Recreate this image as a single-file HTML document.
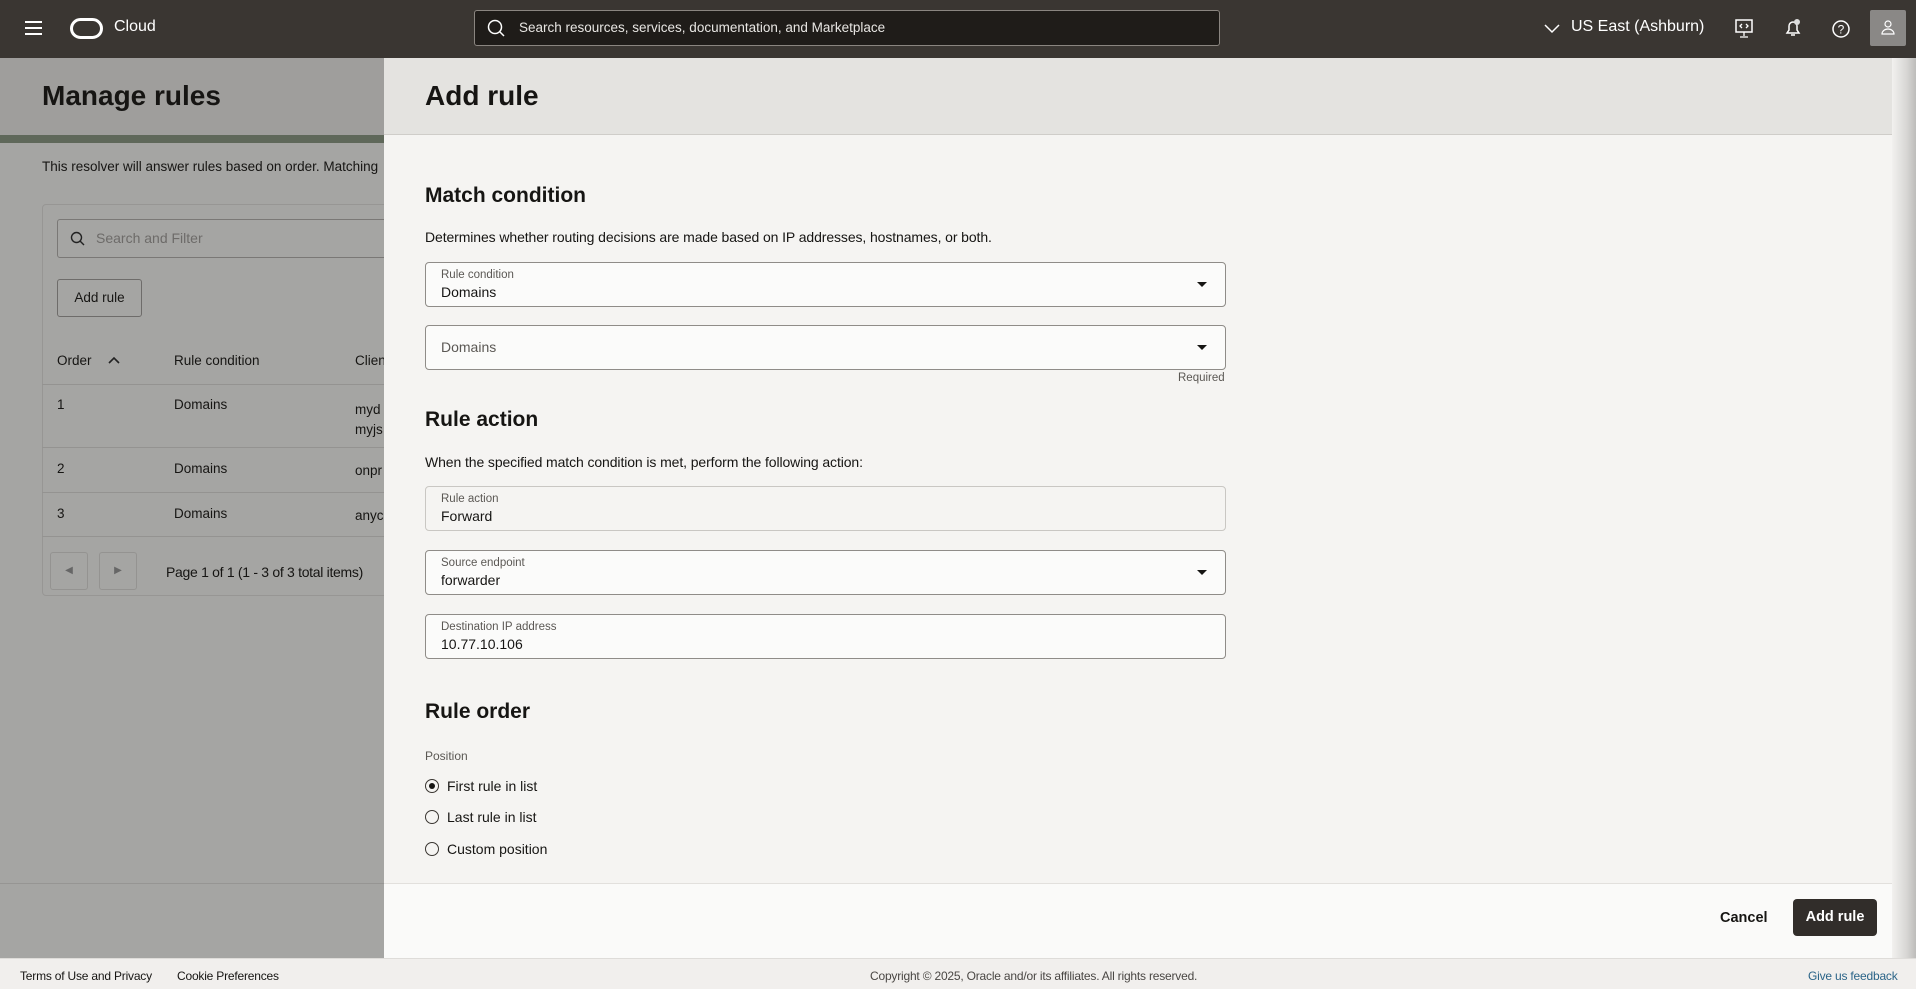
<!DOCTYPE html>
<html><head><meta charset="utf-8"><style>
*{box-sizing:border-box;margin:0;padding:0}
body{width:1916px;height:989px;overflow:hidden;font-family:"Liberation Sans",sans-serif;background:#a6a6a4;position:relative;color:#161513}
.top{position:absolute;left:0;top:0;width:1916px;height:58px;background:#3a3632;color:#fff}
.abs{position:absolute}
.left{position:absolute;left:0;top:58px;width:384px;height:900px;background:#a5a5a3}
.panel{position:absolute;left:384px;top:58px;width:1510px;height:900px;background:#f5f4f2}
.ph{position:absolute;left:0;top:0;width:100%;height:77px;background:#e4e3e0;border-bottom:1px solid #cfcdc9}
.field{position:absolute;left:41px;width:801px;height:45px;border:1px solid #8f8c88;border-radius:4px;background:#fbfbfa}
.field .lb{position:absolute;left:15px;top:6px;font-size:11.5px;color:#5b5854}
.field .v{position:absolute;left:15px;top:21px;font-size:14px}
.caret{position:absolute;right:18px;top:19px;width:0;height:0;border-left:5px solid transparent;border-right:5px solid transparent;border-top:5px solid #161513}
h2{position:absolute;left:41px;font-size:21px;font-weight:bold}
.t{position:absolute;font-size:14px}
.radio{position:absolute;left:41px;width:14px;height:14px;border:1.5px solid #3a3632;border-radius:50%}
</style></head><body>
<div class="top">
 <div class="abs" style="left:25px;top:21px;width:17px;height:2px;background:#fff;box-shadow:0 6px 0 #fff,0 12px 0 #fff"></div>
 <div class="abs" style="left:70px;top:18px;width:33px;height:21px;border:3.5px solid #fff;border-radius:11px"></div>
 <div class="abs" style="left:114px;top:18px;font-size:16px">Cloud</div>
 <div class="abs" style="left:474px;top:10px;width:746px;height:36px;border:1px solid #8a8580;border-radius:3px;background:#1f1c19"></div>
 <svg class="abs" style="left:487px;top:19px" width="18" height="18" viewBox="0 0 18 18"><circle cx="8" cy="8" r="6.5" fill="none" stroke="#fff" stroke-width="1.5"/><path d="M13 13l4 4" stroke="#fff" stroke-width="1.5"/></svg>
 <div class="abs" style="left:519px;top:20px;font-size:13.5px;color:#e8e6e3">Search resources, services, documentation, and Marketplace</div>
 <svg class="abs" style="left:1544px;top:22px" width="16" height="12"><path d="M1 3l7 7 7-7" fill="none" stroke="#fff" stroke-width="1.5"/></svg>
 <div class="abs" style="left:1571px;top:18px;font-size:16px">US East (Ashburn)</div>
 <svg class="abs" style="left:1735px;top:19px" width="18" height="20"><rect x="1" y="1" width="16" height="12" fill="none" stroke="#fff" stroke-width="1.5"/><path d="M9 13v4M5 18h8M7 5l-2 2 2 2M11 5l2 2-2 2" fill="none" stroke="#fff" stroke-width="1.3"/></svg>
 <svg class="abs" style="left:1784px;top:18px" width="18" height="20"><path d="M3 15h12l-2-3V8a4 4 0 0 0-8 0v4z M7 17h4" fill="none" stroke="#fff" stroke-width="1.5"/><circle cx="13" cy="4" r="3" fill="#ddd"/></svg>
 <svg class="abs" style="left:1831px;top:19px" width="20" height="20"><circle cx="10" cy="10" r="8" fill="none" stroke="#fff" stroke-width="1.5"/><text x="10" y="14.5" font-size="12" fill="#fff" text-anchor="middle" font-family="Liberation Sans">?</text></svg>
 <div class="abs" style="left:1870px;top:10px;width:36px;height:36px;background:#8a8886;border-radius:2px"></div>
 <svg class="abs" style="left:1880px;top:18px" width="16" height="18"><circle cx="8" cy="6" r="3" fill="none" stroke="#fff" stroke-width="1.2"/><path d="M2 16a6 5 0 0 1 12 0z" fill="none" stroke="#fff" stroke-width="1.2"/></svg>
</div>
<div class="left">
 <div class="abs" style="left:0;top:0;width:384px;height:77px;background:#9f9e9c"></div>
 <div class="abs" style="left:0;top:77px;width:384px;height:8px;background:#5f685a"></div>
 <div class="abs" style="left:42px;top:22px;font-size:28px;font-weight:bold">Manage rules</div>
 <div class="abs" style="left:42px;top:101px;font-size:13.5px;white-space:nowrap">This resolver will answer rules based on order. Matching</div>
 <div class="abs" style="left:42px;top:146px;width:360px;height:392px;border:1px solid #979694;border-radius:4px"></div>
 <div class="abs" style="left:57px;top:161px;width:340px;height:39px;border:1px solid #7a7876;border-radius:3px"></div>
 <svg class="abs" style="left:70px;top:173px" width="16" height="16"><circle cx="6.5" cy="6.5" r="5" fill="none" stroke="#222" stroke-width="1.4"/><path d="M10 10l4 4" stroke="#222" stroke-width="1.4"/></svg>
 <div class="abs" style="left:96px;top:172px;font-size:14px;color:#6d6b69">Search and Filter</div>
 <div class="abs" style="left:57px;top:221px;width:85px;height:38px;border:1px solid #6e6c6a;border-radius:3px;font-size:13.5px;line-height:36px;text-align:center">Add rule</div>
 <div class="abs" style="left:57px;top:295px;font-size:13.5px">Order</div>
 <svg class="abs" style="left:108px;top:298px" width="12" height="8"><path d="M1 7l5-5 5 5" fill="none" stroke="#222" stroke-width="1.6"/></svg>
 <div class="abs" style="left:174px;top:295px;font-size:13.5px">Rule condition</div>
 <div class="abs" style="left:355px;top:295px;font-size:13.5px">Client</div>
 <div class="abs" style="left:42px;top:326px;width:360px;border-top:1px solid #949391"></div>
 <div class="abs" style="left:57px;top:339px;font-size:13.5px">1</div><div class="abs" style="left:174px;top:339px;font-size:13.5px">Domains</div><div class="abs" style="left:355px;top:342px;font-size:13.5px;line-height:20px">myd<br>myjs</div>
 <div class="abs" style="left:42px;top:389px;width:360px;border-top:1px solid #949391"></div>
 <div class="abs" style="left:57px;top:403px;font-size:13.5px">2</div><div class="abs" style="left:174px;top:403px;font-size:13.5px">Domains</div><div class="abs" style="left:355px;top:405px;font-size:13.5px">onpr</div>
 <div class="abs" style="left:42px;top:434px;width:360px;border-top:1px solid #949391"></div>
 <div class="abs" style="left:57px;top:448px;font-size:13.5px">3</div><div class="abs" style="left:174px;top:448px;font-size:13.5px">Domains</div><div class="abs" style="left:355px;top:450px;font-size:13.5px">anyc</div>
 <div class="abs" style="left:42px;top:478px;width:360px;border-top:1px solid #949391"></div>
 <div class="abs" style="left:50px;top:494px;width:38px;height:38px;border:1px solid #949391;border-radius:3px;font-size:10px;color:#666;text-align:center;line-height:36px">◀</div>
 <div class="abs" style="left:99px;top:494px;width:38px;height:38px;border:1px solid #949391;border-radius:3px;font-size:10px;color:#666;text-align:center;line-height:36px">▶</div>
 <div class="abs" style="left:166px;top:506px;font-size:14px;letter-spacing:-0.3px;white-space:nowrap">Page 1 of 1 (1 - 3 of 3 total items)</div>
 <div class="abs" style="left:0;top:825px;width:384px;border-top:1px solid #969593"></div>
</div>
<div class="panel">
 <div class="ph"></div>
 <div class="abs" style="left:41px;top:22px;font-size:28px;font-weight:bold">Add rule</div>
 <h2 style="top:126px">Match condition</h2>
 <div class="t" style="left:41px;top:171px;letter-spacing:-0.1px">Determines whether routing decisions are made based on IP addresses, hostnames, or both.</div>
 <div class="field" style="top:204px"><div class="lb">Rule condition</div><div class="v">Domains</div><div class="caret"></div></div>
 <div class="field" style="top:267px"><div class="v" style="top:13px;color:#5b5854">Domains</div><div class="caret"></div></div>
 <div class="abs" style="left:794px;top:314px;font-size:11.5px;color:#5b5854">Required</div>
 <h2 style="top:350px">Rule action</h2>
 <div class="t" style="left:41px;top:396px;letter-spacing:-0.1px">When the specified match condition is met, perform the following action:</div>
 <div class="field" style="top:428px;border-color:#c9c7c3;background:#f5f4f2"><div class="lb">Rule action</div><div class="v">Forward</div></div>
 <div class="field" style="top:492px"><div class="lb">Source endpoint</div><div class="v">forwarder</div><div class="caret"></div></div>
 <div class="field" style="top:556px"><div class="lb">Destination IP address</div><div class="v">10.77.10.106</div></div>
 <h2 style="top:642px">Rule order</h2>
 <div class="abs" style="left:41px;top:691px;font-size:12px;color:#5b5854">Position</div>
 <div class="radio" style="top:721px"><div style="position:absolute;left:2.5px;top:2.5px;width:6px;height:6px;border-radius:50%;background:#161513"></div></div>
 <div class="t" style="left:63px;top:720px">First rule in list</div>
 <div class="radio" style="top:752px"></div>
 <div class="t" style="left:63px;top:751px">Last rule in list</div>
 <div class="radio" style="top:784px"></div>
 <div class="t" style="left:63px;top:783px">Custom position</div>
 <div class="abs" style="left:0;top:825px;width:100%;height:75px;background:#fafaf9;border-top:1px solid #e2e0dd"></div>
 <div class="abs" style="left:1336px;top:852px;font-size:14.5px;font-weight:bold">Cancel</div>
 <div class="abs" style="left:1409px;top:841px;width:84px;height:37px;background:#312d2a;border-radius:4px;color:#fff;font-size:14.5px;font-weight:bold;text-align:center;line-height:37px">Add rule</div>
</div>
<div class="abs" style="left:1892px;top:58px;width:24px;height:900px;background:linear-gradient(90deg,#f2f1ef,#d8d7d5 60%,#bdbcba)"></div>
<div class="abs" style="left:0;top:958px;width:1916px;height:31px;background:#f1efed;border-top:1px solid #dedcd9"></div>
<div class="abs" style="left:20px;top:969px;font-size:12px;letter-spacing:-0.2px">Terms of Use and Privacy</div>
<div class="abs" style="left:177px;top:969px;font-size:12px;letter-spacing:-0.2px">Cookie Preferences</div>
<div class="abs" style="left:870px;top:969px;font-size:12px;color:#4a4744;letter-spacing:-0.2px">Copyright © 2025, Oracle and/or its affiliates. All rights reserved.</div>
<div class="abs" style="left:1808px;top:969px;font-size:12px;color:#2b6488;letter-spacing:-0.2px">Give us feedback</div>
</body></html>
